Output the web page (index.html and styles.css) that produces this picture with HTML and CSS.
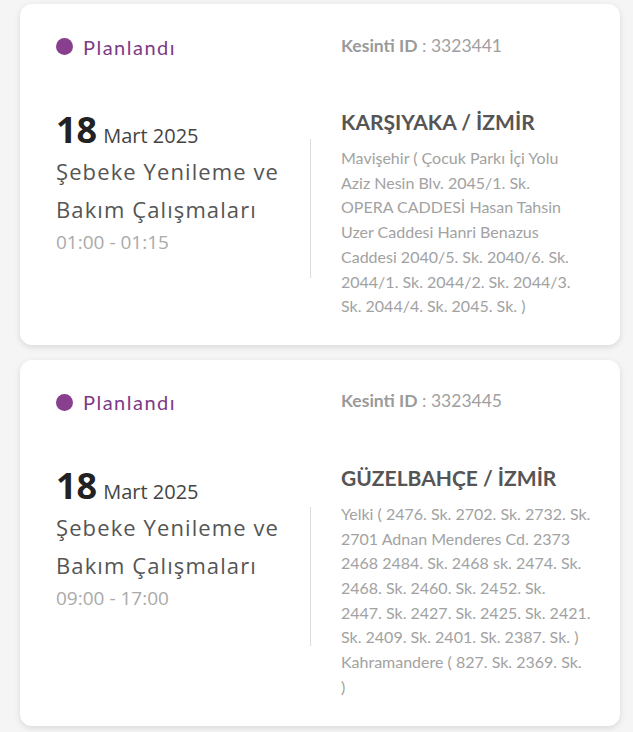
FILE: index.html
```html
<!DOCTYPE html>
<html lang="tr">
<head>
<meta charset="utf-8">
<link rel="stylesheet" href="styles.css">
</head>
<body>
<div class="list">
  <div class="card">
    <div class="head">
      <div class="status"><span class="dot"></span>Planlandı</div>
      <div class="cid"><b>Kesinti ID</b> : 3323441</div>
    </div>
    <div class="body">
      <div class="left">
        <div class="date"><span class="day">18</span> <span class="month">Mart 2025</span></div>
        <div class="title">Şebeke Yenileme ve Bakım Çalışmaları</div>
        <div class="time">01:00 - 01:15</div>
      </div>
      <div class="divider"></div>
      <div class="right">
        <div class="place">KARŞIYAKA / İZMİR</div>
        <div class="addr">Mavişehir ( Çocuk Parkı İçi Yolu<br>Aziz Nesin Blv. 2045/1. Sk.<br>OPERA CADDESİ Hasan Tahsin<br>Uzer Caddesi Hanri Benazus<br>Caddesi 2040/5. Sk. 2040/6. Sk.<br>2044/1. Sk. 2044/2. Sk. 2044/3.<br>Sk. 2044/4. Sk. 2045. Sk. )</div>
      </div>
    </div>
  </div>
  <div class="card">
    <div class="head">
      <div class="status"><span class="dot"></span>Planlandı</div>
      <div class="cid"><b>Kesinti ID</b> : 3323445</div>
    </div>
    <div class="body">
      <div class="left">
        <div class="date"><span class="day">18</span> <span class="month">Mart 2025</span></div>
        <div class="title">Şebeke Yenileme ve Bakım Çalışmaları</div>
        <div class="time">09:00 - 17:00</div>
      </div>
      <div class="divider"></div>
      <div class="right">
        <div class="place">GÜZELBAHÇE / İZMİR</div>
        <div class="addr">Yelki ( 2476. Sk. 2702. Sk. 2732. Sk.<br>2701 Adnan Menderes Cd. 2373<br>2468 2484. Sk. 2468 sk. 2474. Sk.<br>2468. Sk. 2460. Sk. 2452. Sk.<br>2447. Sk. 2427. Sk. 2425. Sk. 2421.<br>Sk. 2409. Sk. 2401. Sk. 2387. Sk. )<br>Kahramandere ( 827. Sk. 2369. Sk.<br>)</div>
      </div>
    </div>
  </div>
</div>
</body>
</html>
```
FILE: styles.css
```css
html, body {
  margin: 0;
  padding: 0;
  background: #f5f5f5;
}
body {
  font-family: "Lato", "Open Sans", sans-serif;
}
.list {
  display: flex;
  flex-direction: column;
  gap: 15px;
  padding: 4px 13px 6px 20px;
}
.card {
  background: #fff;
  border-radius: 12px;
  box-shadow: 0 2px 6px rgba(0,0,0,0.12);
  padding: 26px 20px 26px 36px;
}
.head {
  display: flex;
  align-items: center;
  height: 30px;
}
.status {
  width: 285px;
  display: flex;
  align-items: center;
  color: #7d3a86;
  font-size: 20px;
  letter-spacing: 1.5px;
  margin-top: 3px;
}
.dot {
  width: 17px;
  height: 17px;
  border-radius: 50%;
  background: #883f8d;
  margin-right: 10px;
}
.cid {
  color: #a0a0a0;
  font-size: 17.5px;
}
.cid b {
  color: #9a9a9a;
  font-weight: 700;
}
.body {
  display: flex;
  align-items: flex-start;
  margin-top: 48px;
}
.left {
  width: 254px;
  font-family: "Open Sans", sans-serif;
}
.date {
  display: flex;
  align-items: baseline;
  gap: 6px;
  color: #333;
}
.day {
  font-size: 36px;
  font-weight: 700;
  color: #222;
  line-height: 44px;
}
.month {
  font-size: 20px;
  color: #444;
}
.title {
  font-size: 22px;
  letter-spacing: 1.1px;
  line-height: 38px;
  color: #555;
}
.time {
  font-size: 19px;
  color: #aaa;
  line-height: 26px;
  margin-top: 1px;
}
.divider {
  width: 1px;
  height: 139px;
  background: #dcdcdc;
  align-self: center;
  margin-bottom: 10px;
}
.right {
  flex: 1;
  padding-left: 30px;
}
.place {
  font-size: 21px;
  font-weight: 700;
  color: #555;
  line-height: 28px;
}
.addr {
  margin-top: 10px;
  font-size: 16px;
  line-height: 24.7px;
  color: #a2a2a2;
  white-space: nowrap;
}
```
